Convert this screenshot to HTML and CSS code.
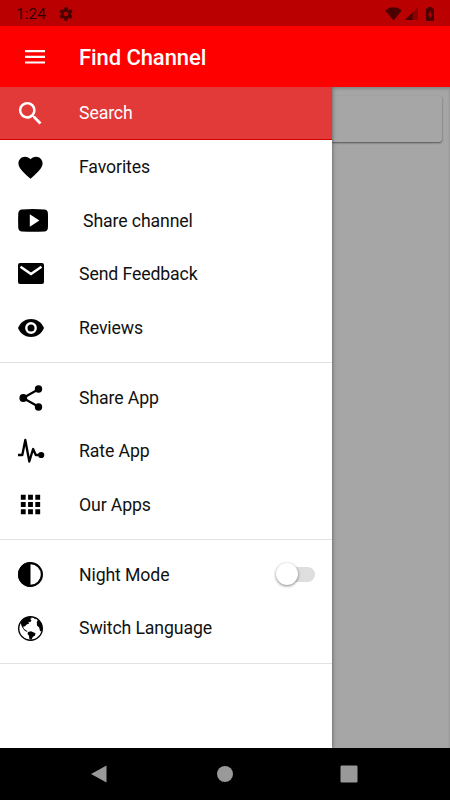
FILE: index.html
```html
<!DOCTYPE html>
<html lang="en">
<head>
<meta charset="utf-8">
<title>Find Channel</title>
<link rel="stylesheet" href="styles.css">
</head>
<body>
<div class="screen">
  <div class="status">
    <span class="clock">1:24</span>
    <svg class="gear" viewBox="0 0 24 24"><path d="M19.43 12.98c.04-.32.07-.64.07-.98s-.03-.66-.07-.98l2.11-1.65c.19-.15.24-.42.12-.64l-2-3.46c-.12-.22-.39-.3-.61-.22l-2.49 1c-.52-.4-1.08-.73-1.69-.98l-.38-2.65A.49.49 0 0 0 14 2h-4c-.25 0-.46.18-.49.42l-.38 2.65c-.61.25-1.17.59-1.69.98l-2.49-1c-.23-.09-.49 0-.61.22l-2 3.46c-.13.22-.07.49.12.64l2.11 1.65c-.04.32-.07.65-.07.98s.03.66.07.98l-2.11 1.65c-.19.15-.24.42-.12.64l2 3.46c.12.22.39.3.61.22l2.49-1c.52.4 1.08.73 1.69.98l.38 2.65c.03.24.24.42.49.42h4c.25 0 .46-.18.49-.42l.38-2.65c.61-.25 1.17-.59 1.69-.98l2.49 1c.23.09.49 0 .61-.22l2-3.46c.12-.22.07-.49-.12-.64zM12 15.5a3.5 3.5 0 1 1 0-7 3.5 3.5 0 0 1 0 7z"/></svg>
    <svg class="wifi" viewBox="0 0 17 14"><path d="M.3 3.500C4.800-.7 12.200-.7 16.700 3.500L8.500 13.600z"/></svg>
    <svg class="signal" viewBox="0 0 13 13"><path d="M0 13 13 0v13z" opacity=".4"/><path d="M0 13 7.500 5.500V13z"/></svg>
    <svg class="battery" viewBox="0 0 8 14"><path fill-rule="evenodd" d="M2.200 0h3.600v1.500H8V14H0V1.500h2.200zM5 3.200 1.800 8.300h1.700v3.600L6.400 7H4.700z"/></svg>
  </div>
  <div class="appbar">
    <svg class="menu" viewBox="0 0 20 14"><path d="M0 0h20v2.200H0zM0 5.700h20v2.200H0zM0 11.400h20v2.200H0z"/></svg>
    <h1>Find Channel</h1>
  </div>
  <div class="content">
    <nav class="drawer">
      <div class="row active"><svg viewBox="0 0 24 24"><path d="M15.500 14h-.79l-.28-.27A6.471 6.471 0 0 0 16 9.500 6.500 6.500 0 1 0 9.500 16c1.610 0 3.090-.59 4.230-1.570l.27.28v.79l5 4.990L20.490 19l-4.990-5zm-6 0C7.010 14 5 11.990 5 9.500S7.010 5 9.500 5 14 7.010 14 9.500 11.990 14 9.500 14z"/></svg><span>Search</span></div>
      <div class="row"><svg viewBox="0 0 24 24"><path d="m12 21.350-1.450-1.320C5.400 15.360 2 12.280 2 8.500 2 5.420 4.420 3 7.500 3c1.740 0 3.410.81 4.500 2.090C13.090 3.810 14.760 3 16.500 3 19.580 3 22 5.420 22 8.500c0 3.780-3.400 6.860-8.550 11.540z"/></svg><span>Favorites</span></div>
      <div class="row share"><svg class="tube" viewBox="0 0 30 23"><path fill-rule="evenodd" d="M4 .4Q15-.3 26.300.4 29.600.6 29.900 4q.3 7.500 0 15-.3 3.200-3.600 3.500-11.300.6-22.300 0Q.7 22.200.3 19q-.4-7.500 0-15Q.7.700 4 .4zM11.800 5.300v12.400l9.600-6.200z"/></svg><span>Share channel</span></div>
      <div class="row"><svg class="mail" viewBox="0 0 26 21"><rect width="26" height="21" rx="2"/><path d="m2.500 3.700 10.500 7.300L23.500 3.700" fill="none" stroke="#fff" stroke-width="2.500"/></svg><span>Send Feedback</span></div>
      <div class="row"><svg class="eye" viewBox="0 0 26 18"><path d="M0 9C4.800-3 21.200-3 26 9 21.200 21 4.800 21 0 9z"/><circle cx="13" cy="9" r="4.700" fill="none" stroke="#fff" stroke-width="2.400"/></svg><span>Reviews</span></div>
      <hr>
      <div class="row"><svg class="nodes" viewBox="0 0 24 26"><path d="M20 4 4 13l16 9" fill="none" stroke="#000" stroke-width="2.200"/><circle cx="19.500" cy="4" r="3.700"/><circle cx="4.300" cy="13" r="3.900"/><circle cx="19.500" cy="22" r="3.700"/></svg><span>Share App</span></div>
      <div class="row"><svg class="pulse" viewBox="0 0 28 26"><path d="M1 17h4.300L8.300 2l4 21.500 3.800-12.500L18.800 17H24" fill="none" stroke="#000" stroke-width="2.300" stroke-linejoin="round"/><circle cx="24.200" cy="17" r="3.100"/></svg><span>Rate App</span></div>
      <div class="row"><svg class="grid" viewBox="0 0 24 24"><path d="M4 8h4V4H4zm6 12h4v-4h-4zm-6 0h4v-4H4zm0-6h4v-4H4zm6 0h4v-4h-4zm6-10v4h4V4zm-6 4h4V4h-4zm6 6h4v-4h-4zm0 6h4v-4h-4z"/></svg><span>Our Apps</span></div>
      <hr>
      <div class="row"><svg class="round" viewBox="0 0 25 25"><circle cx="12.500" cy="12.500" r="11.400" fill="none" stroke="#000" stroke-width="2.200"/><path d="M12.500 0v25a12.500 12.500 0 0 1 0-25z"/></svg><span>Night Mode</span><i class="switch"></i></div>
      <div class="row"><svg class="round" viewBox="0 0 25 25"><circle cx="12.500" cy="12.500" r="11.800" fill="none" stroke="#000" stroke-width="1.400"/><path d="M3.500 5 7 2l5-1.200L14 2l-2 1 1.500 1.300-1.300 2-2-.5 1 1.800-2.500 1-1.700 1.700-2 .5 1.200 2.200 2 1.500 1.500.8-1 .5-2.200-1.300L4 11 2.800 7.500zM10 16l3-.7 4.500 2-.6 2.500-2 1-1.500 3-2-.7-.5-3.500L9.500 18zM20 3.800 18.800 6l.2 3.500 2.200 2 .8 3.500 1.700.5.600-4-1-4zM17 1.500l-1 1 2 .8z"/></svg><span>Switch Language</span></div>
      <hr>
    </nav>
    <main><div class="card"></div></main>
  </div>
  <div class="navbar">
    <svg viewBox="0 0 18 18"><path d="M15.500.5v17L0 9z"/></svg>
    <svg viewBox="0 0 18 18"><circle cx="9" cy="9" r="8"/></svg>
    <svg viewBox="0 0 18 18"><rect x=".5" y=".5" width="17" height="17" rx="1.200"/></svg>
  </div>
</div>
</body>
</html>
```
FILE: styles.css
```css
* { box-sizing: border-box; }
body { margin: 0; font-family: Roboto, "Liberation Sans", sans-serif; }
.screen { width: 450px; height: 800px; display: flex; flex-direction: column; overflow: hidden; background: #a6a6a6; }
svg { display: block; flex: none; }

.status { height: 26px; flex: none; display: flex; align-items: center; padding: 1px 16px 0; background: #ba0000; color: #300000; }
.status svg { fill: #4b0000; }
.clock { width: 42px; font-size: 15.5px; line-height: 18px; }
.gear { width: 16px; height: 16px; }
.wifi { width: 17px; height: 14px; margin-left: auto; }
.signal { width: 13px; height: 13px; margin-left: 3px; }
.battery { width: 8px; height: 14px; margin-left: 8px; }

.appbar { height: 61px; flex: none; display: flex; align-items: center; padding-left: 25px; background: #f00; color: #fff; }
.menu { width: 20px; height: 14px; fill: #fff; }
h1 { margin: 2px 0 0 34px; font-size: 22px; line-height: 28px; font-weight: 500; letter-spacing: -.08px; }

.content { flex: 1; min-height: 0; display: flex; box-shadow: inset 0 2px 3px rgba(0,0,0,.2); }
.drawer { width: 332.4px; height: 661px; flex: none; background: #fff; box-shadow: 0 0 4px rgba(0,0,0,.5); clip-path: inset(0 -8px 0 0); z-index: 1; }
.row { height: 53.500px; display: grid; grid-template-columns: 61px 1fr auto; align-items: center; padding: 0 17.4px 0 18px; font-size: 17.7px; line-height: 24px; letter-spacing: -.12px; color: #111; }
.row svg { width: 29px; height: 29px; margin-left: -2px; }
.row.active { background: #e23939; color: #fff; border-bottom: 1px solid #d60000; height: 53px; margin-bottom: .5px; }
.row.active svg { fill: #fff; width: 31px; height: 31px; margin-left: -3px; }
.row .tube { width: 30px; height: 23px; margin-left: -.5px; }
.row .mail { width: 26px; height: 21px; margin: -1px 0 0; }
.row .eye { width: 26px; height: 18px; margin-left: 0; }
.row .nodes { width: 24px; height: 26px; margin-left: 1px; }
.row .pulse { width: 28px; height: 26px; margin-left: -1px; }
.row .grid { width: 29px; height: 29px; margin-left: -2px; }
.row .round { width: 25px; height: 25px; margin-left: 0; }
.share span { padding-left: 4px; }
hr { height: 1px; margin: 7.500px 0 8px; border: 0; background: #e2e2e2; }

.switch { position: relative; width: 37px; height: 15px; border-radius: 8px; background: #dedede; }
.switch::before { content: ""; position: absolute; left: -2px; top: -4px; width: 22px; height: 22px; border-radius: 50%; background: #fff; box-shadow: 0 1px 3px rgba(0,0,0,.5); }

main { flex: 1; padding: 9px 8px 0 0; }
.card { height: 46px; border-radius: 0 3px 3px 0; background: #a6a6a6; box-shadow: 0 1px 2px rgba(0,0,0,.5); }

.navbar { height: 52px; flex: none; display: flex; justify-content: space-between; align-items: center; padding: 0 92px 0 91px; background: #000; }
.navbar svg { width: 18px; height: 18px; fill: #999; }
```
